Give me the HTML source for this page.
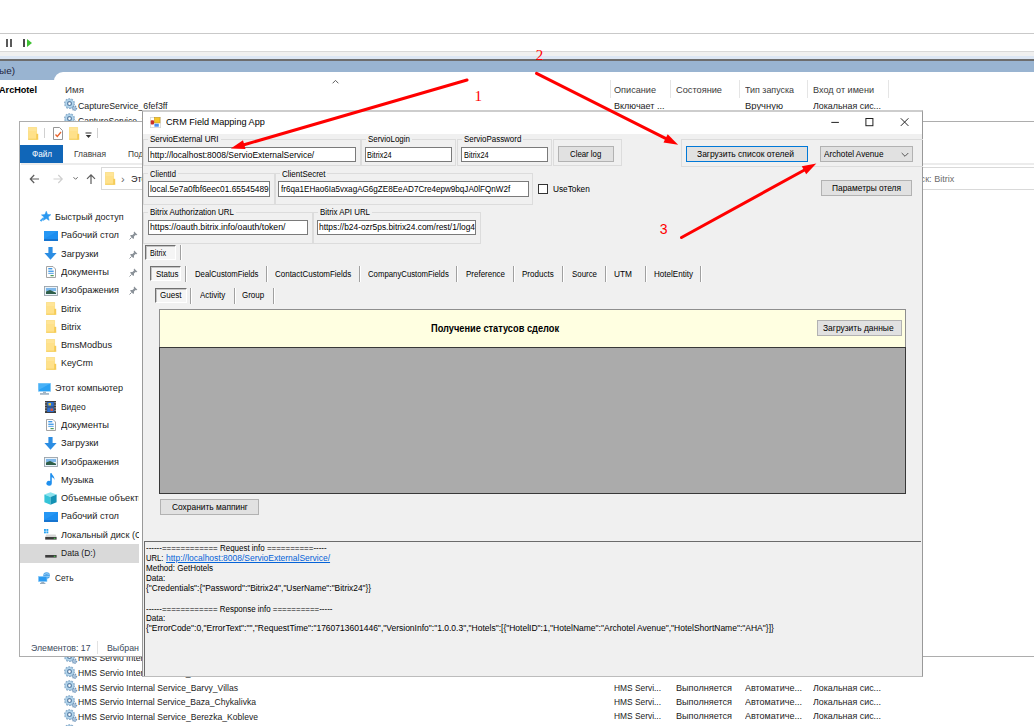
<!DOCTYPE html>
<html lang="ru">
<head>
<meta charset="utf-8">
<title>CRM Field Mapping App</title>
<style>
html,body{margin:0;padding:0;}
body{width:1034px;height:726px;overflow:hidden;position:relative;background:#fff;
  font-family:"Liberation Sans",sans-serif;color:#000;}
.a{position:absolute;}
.t{position:absolute;white-space:nowrap;line-height:14px;transform-origin:0 50%;}
.seg{font-size:9.8px;color:#1c1c1c;}
.hdr{font-size:9.8px;color:#3a3a3a;}
.colsep{position:absolute;top:80px;width:1px;height:18px;background:#e5e5e5;}
#exp{left:19.3px;top:121px;width:1020px;height:535.5px;background:#fff;border:1px solid #adadad;box-sizing:border-box;}
.nav{font-size:9.8px;color:#1a1a1a;}
#crm{left:142px;top:110px;width:781px;height:567px;background:#f0f0f0;border:1px solid #999;border-bottom-color:#bcbcbc;border-top:2px solid #cdcdcd;box-sizing:border-box;box-shadow:-1px 0 1px -0.5px rgba(0,0,0,.12);}
.ms{font-size:9.2px;color:#000;}
.gb{position:absolute;border:1px solid #dcdcdc;box-sizing:border-box;}
.tb{position:absolute;background:#fff;border:1px solid #7a7a7a;box-sizing:border-box;}
.btn{position:absolute;background:#e1e1e1;border:1px solid #b2b2b2;box-sizing:border-box;}
.vsep{position:absolute;width:1px;height:16px;background:#a0a0a0;box-shadow:1px 0 0 #fff;}
.sunk{position:absolute;box-sizing:border-box;border:1px solid;border-color:#707070 #fff #fff #707070;background:#f5f5f5;box-shadow:inset 1px 1px 0 #c4c4c4;}
</style>
</head>
<body>
<!-- MMC services background -->
<div class="a" style="left:0px;top:33px;width:1034px;height:1px;background:#c9c9c9"></div>
<div class="a" style="left:0px;top:51px;width:1034px;height:1px;background:#d9d9d9"></div>
<div class="a" style="left:0px;top:52px;width:1034px;height:4px;background:#f0f0f0"></div>
<div class="a" style="left:0px;top:56px;width:1034px;height:3px;background:#dce6f4"></div>
<div class="a" style="left:0px;top:59.3px;width:1034px;height:1.7px;background:#6d6d6d"></div>
<div class="a" style="left:0px;top:61px;width:1034px;height:19px;background:#99b4d1"></div>
<div class="a" style="left:54px;top:72px;width:990px;height:20px;background:#fff;border-radius:9px 0 0 0"></div>
<svg class="a" style="left:0;top:34px" width="40" height="17" viewBox="0 0 40 17">
  <rect x="6" y="5" width="2" height="8" fill="#5a5a5a"/><rect x="10" y="5" width="2" height="8" fill="#5a5a5a"/>
  <rect x="23" y="5" width="2" height="8" fill="#4a4a4a"/><path d="M27 5 L32 9 L27 13 Z" fill="#3fc133"/>
</svg>
<div class="t seg" style="left:-1px;top:64.3px;transform:scaleX(1.015);color:#1e1e3c">ые)</div>
<div class="t seg" style="left:-1px;top:83.3px;transform:scaleX(0.930);font-weight:bold;color:#000">ArcHotel</div>
<div class="t hdr" style="left:65px;top:83px;transform:scaleX(0.995);">Имя</div>
<svg class="a" style="left:331px;top:78px" width="10" height="7" viewBox="0 0 10 7"><path d="M1.6 5.3 L4.5 2.4 L7.4 5.3" fill="none" stroke="#5c5c5c" stroke-width="1"/></svg>
<div class="colsep" style="left:610px"></div>
<div class="colsep" style="left:670px"></div>
<div class="colsep" style="left:739px"></div>
<div class="colsep" style="left:807px"></div>
<div class="colsep" style="left:888px"></div>
<div class="t hdr" style="left:614px;top:83px;transform:scaleX(0.932);">Описание</div>
<div class="t hdr" style="left:676px;top:83px;transform:scaleX(0.941);">Состояние</div>
<div class="t hdr" style="left:745px;top:83px;transform:scaleX(0.908);">Тип запуска</div>
<div class="t hdr" style="left:813px;top:83px;transform:scaleX(0.926);">Вход от имени</div>
<svg class="a" style="left:64px;top:98.2px" width="15" height="14" viewBox="0 0 15 14"><circle cx="5.5" cy="5.6" r="4.5" fill="#b9daef" stroke="#86a9c8" stroke-width="1.9" stroke-dasharray="1.7 1.1"/><circle cx="5.5" cy="5.6" r="4.1" fill="#b4d6ed" stroke="#9cc0dc" stroke-width="0.8"/><circle cx="5.5" cy="5.6" r="1.9" fill="#fff" stroke="#5d82a8" stroke-width="1.2"/><circle cx="10.4" cy="10.3" r="2.1" fill="#a9c4dc" stroke="#7596b8" stroke-width="1.4" stroke-dasharray="1 0.9"/></svg>
<div class="t seg" style="left:77.9px;top:99.0px;transform:scaleX(0.895);">CaptureService_6fef3ff</div>
<div class="t seg" style="left:614px;top:98.7px;transform:scaleX(0.921);">Включает ...</div>
<div class="t seg" style="left:745px;top:98.7px;transform:scaleX(0.961);">Вручную</div>
<div class="t seg" style="left:813px;top:98.7px;transform:scaleX(0.907);">Локальная сис...</div>
<svg class="a" style="left:64px;top:112.9px" width="15" height="14" viewBox="0 0 15 14"><circle cx="5.5" cy="5.6" r="4.5" fill="#b9daef" stroke="#86a9c8" stroke-width="1.9" stroke-dasharray="1.7 1.1"/><circle cx="5.5" cy="5.6" r="4.1" fill="#b4d6ed" stroke="#9cc0dc" stroke-width="0.8"/><circle cx="5.5" cy="5.6" r="1.9" fill="#fff" stroke="#5d82a8" stroke-width="1.2"/><circle cx="10.4" cy="10.3" r="2.1" fill="#a9c4dc" stroke="#7596b8" stroke-width="1.4" stroke-dasharray="1 0.9"/></svg>
<div class="t seg" style="left:77.9px;top:113.7px;transform:scaleX(0.875);">CaptureService_7a21c4</div>
<svg class="a" style="left:64px;top:650.5px" width="15" height="14" viewBox="0 0 15 14"><circle cx="5.5" cy="5.6" r="4.5" fill="#b9daef" stroke="#86a9c8" stroke-width="1.9" stroke-dasharray="1.7 1.1"/><circle cx="5.5" cy="5.6" r="4.1" fill="#b4d6ed" stroke="#9cc0dc" stroke-width="0.8"/><circle cx="5.5" cy="5.6" r="1.9" fill="#fff" stroke="#5d82a8" stroke-width="1.2"/><circle cx="10.4" cy="10.3" r="2.1" fill="#a9c4dc" stroke="#7596b8" stroke-width="1.4" stroke-dasharray="1 0.9"/></svg>
<div class="t seg" style="left:77.9px;top:651.3px;transform:scaleX(0.875);">HMS Servio Internal Service_Arcadia</div>
<svg class="a" style="left:64px;top:665.5px" width="15" height="14" viewBox="0 0 15 14"><circle cx="5.5" cy="5.6" r="4.5" fill="#b9daef" stroke="#86a9c8" stroke-width="1.9" stroke-dasharray="1.7 1.1"/><circle cx="5.5" cy="5.6" r="4.1" fill="#b4d6ed" stroke="#9cc0dc" stroke-width="0.8"/><circle cx="5.5" cy="5.6" r="1.9" fill="#fff" stroke="#5d82a8" stroke-width="1.2"/><circle cx="10.4" cy="10.3" r="2.1" fill="#a9c4dc" stroke="#7596b8" stroke-width="1.4" stroke-dasharray="1 0.9"/></svg>
<div class="t seg" style="left:77.9px;top:666.3px;transform:scaleX(0.875);">HMS Servio Internal Service_Avrora</div>
<svg class="a" style="left:64px;top:680.0px" width="15" height="14" viewBox="0 0 15 14"><circle cx="5.5" cy="5.6" r="4.5" fill="#b9daef" stroke="#86a9c8" stroke-width="1.9" stroke-dasharray="1.7 1.1"/><circle cx="5.5" cy="5.6" r="4.1" fill="#b4d6ed" stroke="#9cc0dc" stroke-width="0.8"/><circle cx="5.5" cy="5.6" r="1.9" fill="#fff" stroke="#5d82a8" stroke-width="1.2"/><circle cx="10.4" cy="10.3" r="2.1" fill="#a9c4dc" stroke="#7596b8" stroke-width="1.4" stroke-dasharray="1 0.9"/></svg>
<div class="t seg" style="left:77.9px;top:680.8px;transform:scaleX(0.878);">HMS Servio Internal Service_Barvy_Villas</div>
<div class="t seg" style="left:614px;top:680.5px;transform:scaleX(0.855);">HMS Servi...</div>
<div class="t seg" style="left:676px;top:680.5px;transform:scaleX(0.929);">Выполняется</div>
<div class="t seg" style="left:745px;top:680.5px;transform:scaleX(0.919);">Автоматиче...</div>
<div class="t seg" style="left:813px;top:680.5px;transform:scaleX(0.907);">Локальная сис...</div>
<svg class="a" style="left:64px;top:694.5px" width="15" height="14" viewBox="0 0 15 14"><circle cx="5.5" cy="5.6" r="4.5" fill="#b9daef" stroke="#86a9c8" stroke-width="1.9" stroke-dasharray="1.7 1.1"/><circle cx="5.5" cy="5.6" r="4.1" fill="#b4d6ed" stroke="#9cc0dc" stroke-width="0.8"/><circle cx="5.5" cy="5.6" r="1.9" fill="#fff" stroke="#5d82a8" stroke-width="1.2"/><circle cx="10.4" cy="10.3" r="2.1" fill="#a9c4dc" stroke="#7596b8" stroke-width="1.4" stroke-dasharray="1 0.9"/></svg>
<div class="t seg" style="left:77.9px;top:695.3px;transform:scaleX(0.874);">HMS Servio Internal Service_Baza_Chykalivka</div>
<div class="t seg" style="left:614px;top:695px;transform:scaleX(0.855);">HMS Servi...</div>
<div class="t seg" style="left:676px;top:695px;transform:scaleX(0.929);">Выполняется</div>
<div class="t seg" style="left:745px;top:695px;transform:scaleX(0.919);">Автоматиче...</div>
<div class="t seg" style="left:813px;top:695px;transform:scaleX(0.907);">Локальная сис...</div>
<svg class="a" style="left:64px;top:708.8px" width="15" height="14" viewBox="0 0 15 14"><circle cx="5.5" cy="5.6" r="4.5" fill="#b9daef" stroke="#86a9c8" stroke-width="1.9" stroke-dasharray="1.7 1.1"/><circle cx="5.5" cy="5.6" r="4.1" fill="#b4d6ed" stroke="#9cc0dc" stroke-width="0.8"/><circle cx="5.5" cy="5.6" r="1.9" fill="#fff" stroke="#5d82a8" stroke-width="1.2"/><circle cx="10.4" cy="10.3" r="2.1" fill="#a9c4dc" stroke="#7596b8" stroke-width="1.4" stroke-dasharray="1 0.9"/></svg>
<div class="t seg" style="left:77.9px;top:709.5999999999999px;transform:scaleX(0.877);">HMS Servio Internal Service_Berezka_Kobleve</div>
<div class="t seg" style="left:614px;top:709.3px;transform:scaleX(0.855);">HMS Servi...</div>
<div class="t seg" style="left:676px;top:709.3px;transform:scaleX(0.929);">Выполняется</div>
<div class="t seg" style="left:745px;top:709.3px;transform:scaleX(0.919);">Автоматиче...</div>
<div class="t seg" style="left:813px;top:709.3px;transform:scaleX(0.907);">Локальная сис...</div>
<svg class="a" style="left:64px;top:723.5px" width="15" height="14" viewBox="0 0 15 14"><circle cx="5.5" cy="5.6" r="4.5" fill="#b9daef" stroke="#86a9c8" stroke-width="1.9" stroke-dasharray="1.7 1.1"/><circle cx="5.5" cy="5.6" r="4.1" fill="#b4d6ed" stroke="#9cc0dc" stroke-width="0.8"/><circle cx="5.5" cy="5.6" r="1.9" fill="#fff" stroke="#5d82a8" stroke-width="1.2"/><circle cx="10.4" cy="10.3" r="2.1" fill="#a9c4dc" stroke="#7596b8" stroke-width="1.4" stroke-dasharray="1 0.9"/></svg>
<div class="t seg" style="left:77.9px;top:724.3px;transform:scaleX(0.875);">HMS Servio Internal Service_Bukovel</div>
<!-- Explorer window -->
<div id="exp" class="a"></div>
<svg class="a" style="left:27.6px;top:126.6px" width="11" height="13" viewBox="0 0 11 13"><path d="M0.3 0.4 H8.6 V12.6 H0.3 Z" fill="#ffe18a" stroke="#f7d568" stroke-width="0.6"/><path d="M8.2 6.8 L10.2 6.8 V12.6 H8.2 Z" fill="#f6cb55"/><path d="M0.3 11.7 H10.2 V12.6 H0.3 Z" fill="#f5cd5a"/><path d="M0.6 0.7 H8.3 V4 H0.6 Z" fill="#ffe79e" opacity=".7"/></svg>
<div class="a" style="left:44px;top:128px;width:1px;height:10px;background:#d0d0d0"></div>
<svg class="a" style="left:52.6px;top:126.8px" width="10" height="13" viewBox="0 0 10 13"><path d="M0.5 0.5 H6.5 L9.5 3.5 V12.5 H0.5 Z" fill="#fff" stroke="#8a8a8a" stroke-width="0.9"/><path d="M2.5 7.5 L4.3 9.5 L8 5" fill="none" stroke="#e8632c" stroke-width="1.3"/></svg>
<svg class="a" style="left:69.4px;top:126.6px" width="11" height="13" viewBox="0 0 11 13"><path d="M0.3 0.4 H8.6 V12.6 H0.3 Z" fill="#ffe18a" stroke="#f7d568" stroke-width="0.6"/><path d="M8.2 6.8 L10.2 6.8 V12.6 H8.2 Z" fill="#f6cb55"/><path d="M0.3 11.7 H10.2 V12.6 H0.3 Z" fill="#f5cd5a"/><path d="M0.6 0.7 H8.3 V4 H0.6 Z" fill="#ffe79e" opacity=".7"/></svg>
<svg class="a" style="left:85px;top:131.5px" width="7" height="7" viewBox="0 0 7 7"><rect x="0.5" y="0.5" width="6" height="1" fill="#333"/><path d="M0.8 3 H6.2 L3.5 6 Z" fill="#333"/></svg>
<div class="a" style="left:97px;top:128px;width:1px;height:10px;background:#d0d0d0"></div>
<div class="a" style="left:20px;top:145px;width:43px;height:18px;background:#1066b8"></div>
<div class="t nav" style="left:32px;top:147px;transform:scaleX(0.830);color:#fff">Файл</div>
<div class="t nav" style="left:73.5px;top:147px;transform:scaleX(0.858);color:#3a3a3a">Главная</div>
<div class="t nav" style="left:128px;top:147px;transform:scaleX(0.850);color:#3a3a3a">Поделиться</div>
<div class="a" style="left:21px;top:163px;width:1013px;height:2px;background:#ececec"></div>
<svg class="a" style="left:28px;top:171px" width="72" height="16" viewBox="0 0 72 16">
<path d="M2.5 8 H11 M6.2 4 L2.3 8 L6.2 12" fill="none" stroke="#5d5d5d" stroke-width="1.2"/>
<path d="M25.5 8 H34 M30.3 4 L34.2 8 L30.3 12" fill="none" stroke="#cfcfcf" stroke-width="1.2"/>
<path d="M45.5 6.2 L47.6 8.3 L49.7 6.2" fill="none" stroke="#6a6a6a" stroke-width="1"/>
<path d="M63 13 V4 M59 7.8 L63 3.8 L67 7.8" fill="none" stroke="#5d5d5d" stroke-width="1.2"/>
</svg>
<div class="a" style="left:101px;top:167px;width:42px;height:23px;border:1px solid #d9d9d9;border-right:0;box-sizing:border-box;background:#fff"></div>
<svg class="a" style="left:105px;top:172px" width="11" height="13" viewBox="0 0 11 13"><path d="M0.3 0.4 H8.6 V12.6 H0.3 Z" fill="#ffe18a" stroke="#f7d568" stroke-width="0.6"/><path d="M8.2 6.8 L10.2 6.8 V12.6 H8.2 Z" fill="#f6cb55"/><path d="M0.3 11.7 H10.2 V12.6 H0.3 Z" fill="#f5cd5a"/><path d="M0.6 0.7 H8.3 V4 H0.6 Z" fill="#ffe79e" opacity=".7"/></svg>
<div class="t nav" style="left:121px;top:172px;color:#666;font-size:11px">›</div>
<div class="t nav" style="left:131px;top:172px;transform:scaleX(0.928);">Этот компьютер</div>
<div class="a" style="left:916px;top:167px;width:130px;height:23px;border:1px solid #d9d9d9;box-sizing:border-box;background:#fff"></div>
<div class="t nav" style="left:904px;top:172px;transform:scaleX(0.925);color:#6d6d6d">Поиск: Bitrix</div>
<div class="a" style="left:20.3px;top:544.2px;width:118.7px;height:18.4px;background:#d9d9d9"></div>
<div class="a" style="left:21px;top:200px;width:118px;height:400px;overflow:hidden">
<svg class="a" style="left:19px;top:11px" width="11" height="11" viewBox="0 0 11 11"><path d="M6.3 0.3 L7.5 3.5 L10.8 3.7 L8.2 5.9 L9.1 9.3 L6.2 7.5 L3.3 9.4 L4.1 6 L1.5 3.9 L4.9 3.6 Z" fill="#2a98f0" stroke="#2a98f0" stroke-width="0.6" stroke-linejoin="round"/><path d="M3.8 6.8 L0.6 10" stroke="#45a8f4" stroke-width="1.8"/></svg>
<div class="t nav" style="left:33.5px;top:10px;transform:scaleX(0.923);">Быстрый доступ</div>
<svg class="a" style="left:23px;top:31px" width="14" height="10" viewBox="0 0 14 10"><rect x="0" y="0" width="14" height="10" fill="#1c8ef0"/><rect x="0" y="8" width="14" height="2" fill="#1674cf"/><path d="M0 0 H14 L0 8 Z" fill="#2d9df6" opacity=".6"/></svg>
<div class="t nav" style="left:39.5px;top:28.30000000000001px;transform:scaleX(0.943);">Рабочий стол</div>
<svg class="a" style="left:107.5px;top:31px" width="9" height="9" viewBox="0 0 9 9"><path d="M5.2 0.6 L8.4 3.8 L7.4 4.3 L6.6 4 L5 5.6 L5 7.2 L4.2 7.9 L1.1 4.8 L1.8 4 L3.4 4 L5 2.4 L4.7 1.6 Z" fill="#8b9299"/><path d="M2.6 6.4 L0.5 8.5" stroke="#8b9299" stroke-width="1"/></svg>
<svg class="a" style="left:23px;top:47px" width="13" height="13" viewBox="0 0 13 13"><path d="M4.4 0 H8.6 V6 H12.6 L6.5 12.8 L0.4 6 H4.4 Z" fill="#2b8de3"/></svg>
<div class="t nav" style="left:39.5px;top:46.599999999999994px;transform:scaleX(0.951);">Загрузки</div>
<svg class="a" style="left:107.5px;top:50px" width="9" height="9" viewBox="0 0 9 9"><path d="M5.2 0.6 L8.4 3.8 L7.4 4.3 L6.6 4 L5 5.6 L5 7.2 L4.2 7.9 L1.1 4.8 L1.8 4 L3.4 4 L5 2.4 L4.7 1.6 Z" fill="#8b9299"/><path d="M2.6 6.4 L0.5 8.5" stroke="#8b9299" stroke-width="1"/></svg>
<svg class="a" style="left:25px;top:66px" width="10" height="12" viewBox="0 0 10 12"><path d="M0.5 0.5 H7 L9.5 3 V11.5 H0.5 Z" fill="#fdfdfd" stroke="#9a9a9a" stroke-width="0.9"/><rect x="2.3" y="2" width="4" height="1.4" fill="#3e97e6"/><rect x="2.3" y="4.6" width="5.4" height="1.3" fill="#3e97e6"/><rect x="2.3" y="6.8" width="5.4" height="1.2" fill="#6aaee8"/><rect x="4.5" y="9" width="3.2" height="1.2" fill="#4e9a5a"/></svg>
<div class="t nav" style="left:39.5px;top:64.89999999999998px;transform:scaleX(0.950);">Документы</div>
<svg class="a" style="left:107.5px;top:68px" width="9" height="9" viewBox="0 0 9 9"><path d="M5.2 0.6 L8.4 3.8 L7.4 4.3 L6.6 4 L5 5.6 L5 7.2 L4.2 7.9 L1.1 4.8 L1.8 4 L3.4 4 L5 2.4 L4.7 1.6 Z" fill="#8b9299"/><path d="M2.6 6.4 L0.5 8.5" stroke="#8b9299" stroke-width="1"/></svg>
<svg class="a" style="left:23px;top:86px" width="14" height="10" viewBox="0 0 14 10"><rect x="0.5" y="0.5" width="13" height="9" fill="#eaf3fb" stroke="#9aa3ab" stroke-width="0.9"/><rect x="2" y="2" width="10" height="3" fill="#7db7ea"/><path d="M2 8 L2 5.4 L6 4 L12 6.8 L12 8 Z" fill="#2f5f4a"/></svg>
<div class="t nav" style="left:39.5px;top:83.19999999999999px;transform:scaleX(0.942);">Изображения</div>
<svg class="a" style="left:107.5px;top:86px" width="9" height="9" viewBox="0 0 9 9"><path d="M5.2 0.6 L8.4 3.8 L7.4 4.3 L6.6 4 L5 5.6 L5 7.2 L4.2 7.9 L1.1 4.8 L1.8 4 L3.4 4 L5 2.4 L4.7 1.6 Z" fill="#8b9299"/><path d="M2.6 6.4 L0.5 8.5" stroke="#8b9299" stroke-width="1"/></svg>
<svg class="a" style="left:24.5px;top:102px" width="11" height="13" viewBox="0 0 11 13"><path d="M0.3 0.4 H8.6 V12.6 H0.3 Z" fill="#ffe18a" stroke="#f7d568" stroke-width="0.6"/><path d="M8.2 6.8 L10.2 6.8 V12.6 H8.2 Z" fill="#f6cb55"/><path d="M0.3 11.7 H10.2 V12.6 H0.3 Z" fill="#f5cd5a"/><path d="M0.6 0.7 H8.3 V4 H0.6 Z" fill="#ffe79e" opacity=".7"/></svg>
<div class="t nav" style="left:39.5px;top:101.5px;transform:scaleX(0.918);">Bitrix</div>
<svg class="a" style="left:24.5px;top:120px" width="11" height="13" viewBox="0 0 11 13"><path d="M0.3 0.4 H8.6 V12.6 H0.3 Z" fill="#ffe18a" stroke="#f7d568" stroke-width="0.6"/><path d="M8.2 6.8 L10.2 6.8 V12.6 H8.2 Z" fill="#f6cb55"/><path d="M0.3 11.7 H10.2 V12.6 H0.3 Z" fill="#f5cd5a"/><path d="M0.6 0.7 H8.3 V4 H0.6 Z" fill="#ffe79e" opacity=".7"/></svg>
<div class="t nav" style="left:39.5px;top:119.80000000000001px;transform:scaleX(0.918);">Bitrix</div>
<svg class="a" style="left:24.5px;top:139px" width="11" height="13" viewBox="0 0 11 13"><path d="M0.3 0.4 H8.6 V12.6 H0.3 Z" fill="#ffe18a" stroke="#f7d568" stroke-width="0.6"/><path d="M8.2 6.8 L10.2 6.8 V12.6 H8.2 Z" fill="#f6cb55"/><path d="M0.3 11.7 H10.2 V12.6 H0.3 Z" fill="#f5cd5a"/><path d="M0.6 0.7 H8.3 V4 H0.6 Z" fill="#ffe79e" opacity=".7"/></svg>
<div class="t nav" style="left:39.5px;top:138.10000000000002px;transform:scaleX(0.937);">BmsModbus</div>
<svg class="a" style="left:24.5px;top:157px" width="11" height="13" viewBox="0 0 11 13"><path d="M0.3 0.4 H8.6 V12.6 H0.3 Z" fill="#ffe18a" stroke="#f7d568" stroke-width="0.6"/><path d="M8.2 6.8 L10.2 6.8 V12.6 H8.2 Z" fill="#f6cb55"/><path d="M0.3 11.7 H10.2 V12.6 H0.3 Z" fill="#f5cd5a"/><path d="M0.6 0.7 H8.3 V4 H0.6 Z" fill="#ffe79e" opacity=".7"/></svg>
<div class="t nav" style="left:39.5px;top:156.39999999999998px;transform:scaleX(0.904);">KeyCrm</div>
<svg class="a" style="left:17px;top:183px" width="13" height="12" viewBox="0 0 13 12"><rect x="0.3" y="0.3" width="12.4" height="8" fill="#2aa1f3" stroke="#8ecdf9" stroke-width="0.6"/><path d="M0.6 0.6 H12.4 L0.6 7 Z" fill="#55b8f8" opacity=".7"/><rect x="5" y="8.6" width="3" height="1.4" fill="#9fb3c4"/><rect x="2" y="10.4" width="9" height="1.1" fill="#6d8aa3"/></svg>
<div class="t nav" style="left:33.5px;top:181.3px;transform:scaleX(0.928);">Этот компьютер</div>
<svg class="a" style="left:24px;top:201px" width="11" height="12" viewBox="0 0 11 12"><rect x="0" y="0" width="11" height="12" fill="#3c3c3c"/><rect x="2.2" y="1" width="6.6" height="4.6" fill="#2d6fd0"/><rect x="2.2" y="6.4" width="6.6" height="4.6" fill="#2d6fd0"/><rect x="3.5" y="2" width="2.5" height="2.5" fill="#e3c53a"/><rect x="5.5" y="7.5" width="2.5" height="2.5" fill="#d9573a"/><g fill="#cfcfcf"><rect x="0.4" y="1" width="1" height="1.3"/><rect x="0.4" y="3.6" width="1" height="1.3"/><rect x="0.4" y="6.2" width="1" height="1.3"/><rect x="0.4" y="8.8" width="1" height="1.3"/><rect x="9.6" y="1" width="1" height="1.3"/><rect x="9.6" y="3.6" width="1" height="1.3"/><rect x="9.6" y="6.2" width="1" height="1.3"/><rect x="9.6" y="8.8" width="1" height="1.3"/></g></svg>
<div class="t nav" style="left:39.5px;top:199.60000000000002px;transform:scaleX(0.859);">Видео</div>
<svg class="a" style="left:25px;top:219px" width="10" height="12" viewBox="0 0 10 12"><path d="M0.5 0.5 H7 L9.5 3 V11.5 H0.5 Z" fill="#fdfdfd" stroke="#9a9a9a" stroke-width="0.9"/><rect x="2.3" y="2" width="4" height="1.4" fill="#3e97e6"/><rect x="2.3" y="4.6" width="5.4" height="1.3" fill="#3e97e6"/><rect x="2.3" y="6.8" width="5.4" height="1.2" fill="#6aaee8"/><rect x="4.5" y="9" width="3.2" height="1.2" fill="#4e9a5a"/></svg>
<div class="t nav" style="left:39.5px;top:217.89999999999998px;transform:scaleX(0.950);">Документы</div>
<svg class="a" style="left:23px;top:237px" width="13" height="13" viewBox="0 0 13 13"><path d="M4.4 0 H8.6 V6 H12.6 L6.5 12.8 L0.4 6 H4.4 Z" fill="#2b8de3"/></svg>
<div class="t nav" style="left:39.5px;top:236.2px;transform:scaleX(0.951);">Загрузки</div>
<svg class="a" style="left:23px;top:257px" width="14" height="10" viewBox="0 0 14 10"><rect x="0.5" y="0.5" width="13" height="9" fill="#eaf3fb" stroke="#9aa3ab" stroke-width="0.9"/><rect x="2" y="2" width="10" height="3" fill="#7db7ea"/><path d="M2 8 L2 5.4 L6 4 L12 6.8 L12 8 Z" fill="#2f5f4a"/></svg>
<div class="t nav" style="left:39.5px;top:254.5px;transform:scaleX(0.942);">Изображения</div>
<svg class="a" style="left:25px;top:273px" width="10" height="13" viewBox="0 0 10 13"><path d="M4.2 0.3 H5.8 C6 2.6 9 3.4 8.4 7 C8.2 4.8 6.6 4.4 5.8 4.2 V10.2 A2.7 2.4 0 1 1 4.2 8.1 Z" fill="#1f8fee"/></svg>
<div class="t nav" style="left:39.5px;top:272.8px;transform:scaleX(0.944);">Музыка</div>
<svg class="a" style="left:23px;top:292px" width="13" height="13" viewBox="0 0 13 13"><path d="M6.5 0.3 L12.6 2.6 L6.5 5 L0.4 2.6 Z" fill="#8be3ee"/><path d="M0.4 2.6 L6.5 5 V12.8 L0.4 10.2 Z" fill="#35c4d8"/><path d="M12.6 2.6 L6.5 5 V12.8 L12.6 10.2 Z" fill="#1492b4"/></svg>
<div class="t nav" style="left:39.5px;top:291.1px;transform:scaleX(0.933);">Объемные объекты</div>
<svg class="a" style="left:23px;top:312px" width="14" height="10" viewBox="0 0 14 10"><rect x="0" y="0" width="14" height="10" fill="#1c8ef0"/><rect x="0" y="8" width="14" height="2" fill="#1674cf"/><path d="M0 0 H14 L0 8 Z" fill="#2d9df6" opacity=".6"/></svg>
<div class="t nav" style="left:39.5px;top:309.4px;transform:scaleX(0.943);">Рабочий стол</div>
<svg class="a" style="left:23px;top:329px" width="13" height="11" viewBox="0 0 13 11"><path d="M2.2 5.6 H11.6 L12.6 8 H1.2 Z" fill="#d6d6d6"/><rect x="1.2" y="8" width="11.4" height="2.6" fill="#3d3d3d"/><rect x="9.8" y="8.8" width="1.6" height="1" fill="#44d04a"/><g fill="#27a3f2"><rect x="0" y="0" width="1.9" height="1.9"/><rect x="2.4" y="0" width="1.9" height="1.9"/><rect x="0" y="2.4" width="1.9" height="1.9"/><rect x="2.4" y="2.4" width="1.9" height="1.9"/></g></svg>
<div class="t nav" style="left:39.5px;top:327.70000000000005px;transform:scaleX(0.928);">Локальный диск (C:)</div>
<svg class="a" style="left:23px;top:347px" width="13" height="11" viewBox="0 0 13 11"><path d="M2.2 5.6 H11.6 L12.6 8 H1.2 Z" fill="#d6d6d6"/><rect x="1.2" y="8" width="11.4" height="2.6" fill="#3d3d3d"/><rect x="9.8" y="8.8" width="1.6" height="1" fill="#44d04a"/></svg>
<div class="t nav" style="left:39.5px;top:346.0px;transform:scaleX(0.870);">Data (D:)</div>
<svg class="a" style="left:17px;top:371.5px" width="13" height="12" viewBox="0 0 13 12"><circle cx="8.6" cy="3.6" r="3.3" fill="#4aa3e8"/><path d="M6 2.5 Q8.6 0.8 11.4 2.4 M5.6 4.4 H11.8" stroke="#bfe1fa" stroke-width="0.7" fill="none"/><rect x="0.4" y="4.4" width="8.6" height="5.2" fill="#2b9af0" stroke="#90cdf8" stroke-width="0.6"/><rect x="3.2" y="9.9" width="3" height="0.9" fill="#8aa0b3"/><rect x="2" y="10.9" width="5.4" height="0.8" fill="#6d8aa3"/></svg>
<div class="t nav" style="left:33.5px;top:370.6px;transform:scaleX(0.849);">Сеть</div>
</div>
<div class="t nav" style="left:31px;top:640.5px;transform:scaleX(0.890);color:#3b4a5c">Элементов: 17</div>
<div class="a" style="left:97px;top:641px;width:1px;height:13px;background:#e2e2e2"></div>
<div class="t nav" style="left:107px;top:640.5px;transform:scaleX(0.899);color:#3b4a5c">Выбран</div>
<div class="t nav" style="left:143px;top:640.5px;transform:scaleX(0.920);color:#3b4a5c">1 элемент</div>
<!-- CRM window -->
<div id="crm" class="a"></div>
<div class="a" style="left:143px;top:112px;width:779px;height:22px;background:#fff"></div>
<svg class="a" style="left:150px;top:117px" width="11" height="11" viewBox="0 0 11 11"><rect x="0.4" y="0.4" width="10.2" height="10.2" fill="#fff" stroke="#d6d6d6" stroke-width="0.8"/><rect x="0.7" y="3.2" width="3.3" height="4.3" rx="0.9" fill="#c9302a"/><rect x="4.4" y="0.5" width="5.6" height="5.4" fill="#f6c72a" stroke="#c99c1c" stroke-width="0.6"/><rect x="4.4" y="6.7" width="4.4" height="3" fill="#4b8ef0"/></svg>
<div class="t seg" style="left:165.5px;top:115.2px;transform:scaleX(0.950);font-size:9.6px;color:#000">CRM Field Mapping App</div>
<svg class="a" style="left:826px;top:114px" width="90" height="17" viewBox="0 0 90 17">
<path d="M5.3 8.4 H12.9" stroke="#222" stroke-width="1"/>
<rect x="39.9" y="4.5" width="7" height="7.2" fill="none" stroke="#222" stroke-width="1"/>
<path d="M74.8 4.3 L82.4 11.9 M82.4 4.3 L74.8 11.9" stroke="#222" stroke-width="1"/>
</svg>
<div class="gb" style="left:143px;top:138.8px;width:218px;height:27.6px;"></div>
<div class="a" style="left:148px;top:136.8px;width:72.5px;height:6px;background:#f0f0f0"></div>
<div class="t ms" style="left:150px;top:132.3px;transform:scaleX(0.877);">ServioExternal URI</div>
<div class="tb" style="left:147.7px;top:147px;width:208.3px;height:15.2px;overflow:hidden">
<div class="t ms" style="left:1.7px;top:-0.10000000000000053px;transform:scaleX(0.924);">http://localhost:8008/ServioExternalService/</div>
</div>
<div class="gb" style="left:361px;top:138.8px;width:95px;height:27.6px;"></div>
<div class="a" style="left:366px;top:136.8px;width:46px;height:6px;background:#f0f0f0"></div>
<div class="t ms" style="left:368px;top:132.3px;transform:scaleX(0.865);">ServioLogin</div>
<div class="tb" style="left:364.8px;top:147px;width:87.2px;height:15.2px;overflow:hidden">
<div class="t ms" style="left:1.7px;top:-0.10000000000000053px;transform:scaleX(0.806);">Bitrix24</div>
</div>
<div class="gb" style="left:457px;top:138.8px;width:95px;height:27.6px;"></div>
<div class="a" style="left:462px;top:136.8px;width:61.3px;height:6px;background:#f0f0f0"></div>
<div class="t ms" style="left:464px;top:132.3px;transform:scaleX(0.863);">ServioPassword</div>
<div class="tb" style="left:461px;top:147px;width:87px;height:15.2px;overflow:hidden">
<div class="t ms" style="left:1.7px;top:-0.10000000000000053px;transform:scaleX(0.806);">Bitrix24</div>
</div>
<div class="gb" style="left:553px;top:138.8px;width:69px;height:27.6px;"></div>
<div class="btn" style="left:558.2px;top:146.2px;width:55.4px;height:15.4px;">
<div class="t ms" style="left:11.0px;top:0.0px;transform:scaleX(0.851);">Clear log</div>
</div>
<div class="gb" style="left:680.5px;top:138.8px;width:242px;height:28.3px;border-right:0"></div>
<div class="btn" style="left:685.5px;top:146px;width:122px;height:16px;border:1.6px solid #0078d7;">
<div class="t ms" style="left:10.9px;top:-0.2999999999999998px;transform:scaleX(0.924);">Загрузить список отелей</div>
</div>
<div class="btn" style="left:820.3px;top:146.2px;width:92.3px;height:15.4px;">
<div class="t ms" style="left:2.3px;top:0px;transform:scaleX(0.891);">Archotel Avenue</div>
<svg class="a" style="left:80px;top:4.5px" width="8" height="6" viewBox="0 0 8 6"><path d="M0.7 1 L4 4.3 L7.3 1" fill="none" stroke="#444" stroke-width="0.9"/></svg>
</div>
<div class="gb" style="left:143px;top:173.3px;width:131.5px;height:31.7px;"></div>
<div class="a" style="left:148px;top:171.3px;width:30px;height:6px;background:#f0f0f0"></div>
<div class="t ms" style="left:150px;top:166.8px;transform:scaleX(0.835);">ClientId</div>
<div class="tb" style="left:147.7px;top:181px;width:122.3px;height:15.5px;overflow:hidden">
<div class="t ms" style="left:1.7px;top:0.04999999999999982px;transform:scaleX(0.908);">local.5e7a0fbf6eec01.65545489</div>
</div>
<div class="gb" style="left:274.5px;top:173.3px;width:258.5px;height:31.7px;"></div>
<div class="a" style="left:279.5px;top:171.3px;width:47.5px;height:6px;background:#f0f0f0"></div>
<div class="t ms" style="left:281.5px;top:166.8px;transform:scaleX(0.869);">ClientSecret</div>
<div class="tb" style="left:278px;top:181px;width:250.5px;height:15.5px;overflow:hidden">
<div class="t ms" style="left:1.7px;top:0.04999999999999982px;transform:scaleX(0.882);">fr6qa1EHao6Ia5vxagAG6gZE8EeAD7Cre4epw9bqJA0lFQnW2f</div>
</div>
<div class="a" style="left:538px;top:183.5px;width:10px;height:10px;background:#fff;border:1px solid #333;box-sizing:border-box"></div>
<div class="t ms" style="left:552.6px;top:181.8px;transform:scaleX(0.901);">UseToken</div>
<div class="btn" style="left:821.2px;top:180.3px;width:90.8px;height:15.4px;">
<div class="t ms" style="left:9.9px;top:0.0px;transform:scaleX(0.912);">Параметры отеля</div>
</div>
<div class="gb" style="left:143px;top:211.6px;width:169.5px;height:32.3px;"></div>
<div class="a" style="left:148px;top:209.6px;width:88px;height:6px;background:#f0f0f0"></div>
<div class="t ms" style="left:150px;top:205.1px;transform:scaleX(0.866);">Bitrix Authorization URL</div>
<div class="tb" style="left:147.7px;top:219.5px;width:160px;height:15px;overflow:hidden">
<div class="t ms" style="left:1.7px;top:-0.20000000000000018px;transform:scaleX(0.947);">https://oauth.bitrix.info/oauth/token/</div>
</div>
<div class="gb" style="left:312.5px;top:211.6px;width:168px;height:32.3px;"></div>
<div class="a" style="left:317.5px;top:209.6px;width:54px;height:6px;background:#f0f0f0"></div>
<div class="t ms" style="left:319.5px;top:205.1px;transform:scaleX(0.859);">Bitrix API URL</div>
<div class="tb" style="left:316.5px;top:219.5px;width:159.5px;height:15px;overflow:hidden">
<div class="t ms" style="left:1.7px;top:-0.20000000000000018px;transform:scaleX(0.912);">https://b24-ozr5ps.bitrix24.com/rest/1/log4</div>
</div>
<div class="sunk" style="left:144.8px;top:244.8px;width:31px;height:14.8px;"></div>
<div class="t ms" style="left:150px;top:246px;transform:scaleX(0.783);">Bitrix</div>
<div class="vsep" style="left:180.2px;top:245px;height:15px"></div>
<div class="sunk" style="left:150px;top:266px;width:31px;height:15px;"></div>
<div class="t ms" style="left:155.5px;top:267.2px;transform:scaleX(0.864);">Status</div>
<div class="vsep" style="left:185.4px;top:265.5px;height:16px"></div>
<div class="vsep" style="left:266.3px;top:265.5px;height:16px"></div>
<div class="vsep" style="left:359.2px;top:265.5px;height:16px"></div>
<div class="vsep" style="left:456.4px;top:265.5px;height:16px"></div>
<div class="vsep" style="left:513.2px;top:265.5px;height:16px"></div>
<div class="vsep" style="left:562.3px;top:265.5px;height:16px"></div>
<div class="vsep" style="left:605px;top:265.5px;height:16px"></div>
<div class="vsep" style="left:645px;top:265.5px;height:16px"></div>
<div class="vsep" style="left:700.4px;top:265.5px;height:16px"></div>
<div class="t ms" style="left:194.5px;top:266.8px;transform:scaleX(0.846);">DealCustomFields</div>
<div class="t ms" style="left:274.6px;top:266.8px;transform:scaleX(0.868);">ContactCustomFields</div>
<div class="t ms" style="left:367.5px;top:266.8px;transform:scaleX(0.846);">CompanyCustomFields</div>
<div class="t ms" style="left:465.7px;top:266.8px;transform:scaleX(0.868);">Preference</div>
<div class="t ms" style="left:522px;top:266.8px;transform:scaleX(0.874);">Products</div>
<div class="t ms" style="left:571.5px;top:266.8px;transform:scaleX(0.858);">Source</div>
<div class="t ms" style="left:614px;top:266.8px;transform:scaleX(0.904);">UTM</div>
<div class="t ms" style="left:653.6px;top:266.8px;transform:scaleX(0.878);">HotelEntity</div>
<div class="sunk" style="left:155.2px;top:287.5px;width:31.5px;height:15.2px;"></div>
<div class="t ms" style="left:160.3px;top:288.3px;transform:scaleX(0.877);">Guest</div>
<div class="vsep" style="left:190.3px;top:287.5px;height:16px"></div>
<div class="vsep" style="left:233.6px;top:287.5px;height:16px"></div>
<div class="vsep" style="left:273.2px;top:287.5px;height:16px"></div>
<div class="t ms" style="left:199.8px;top:287.8px;transform:scaleX(0.866);">Activity</div>
<div class="t ms" style="left:241.8px;top:287.8px;transform:scaleX(0.869);">Group</div>
<div class="a" style="left:159px;top:309px;width:747px;height:39px;background:#ffffe1;border:1px solid #8e8e8e;box-sizing:border-box"></div>
<div class="a" style="left:159px;top:347px;width:747px;height:147px;background:#ababab;border:1px solid #383838;box-sizing:border-box"></div>
<div class="t ms" style="left:431px;top:320.8px;transform:scaleX(0.872);font-weight:bold;font-size:10.6px;color:#000">Получение статусов сделок</div>
<div class="btn" style="left:817.4px;top:320.2px;width:84.6px;height:15.5px;">
<div class="t ms" style="left:4.9px;top:0.04999999999999982px;transform:scaleX(0.919);">Загрузить данные</div>
</div>
<div class="btn" style="left:160px;top:499.3px;width:99px;height:15.4px;">
<div class="t ms" style="left:10.6px;top:0.0px;transform:scaleX(0.912);">Сохранить маппинг</div>
</div>
<div class="a" style="left:143.5px;top:540.5px;width:777px;height:135.3px;background:#f0f0f0;border-top:1.5px solid #6b6b6b;border-left:1px solid #6b6b6b;box-sizing:border-box"></div>
<div class="t ms" style="left:145.8px;top:540.5px;transform:scaleX(0.867);">------============ Request info ==========-----</div>
<div class="t ms" style="left:145.8px;top:561px;transform:scaleX(0.875);">Method: GetHotels</div>
<div class="t ms" style="left:145.8px;top:570.6px;transform:scaleX(0.879);">Data:</div>
<div class="t ms" style="left:145.8px;top:581px;transform:scaleX(0.911);">{"Credentials":{"Password":"Bitrix24","UserName":"Bitrix24"}}</div>
<div class="t ms" style="left:145.8px;top:601.5px;transform:scaleX(0.865);">------============ Response info ==========-----</div>
<div class="t ms" style="left:145.8px;top:611px;transform:scaleX(0.879);">Data:</div>
<div class="t ms" style="left:145.8px;top:621px;transform:scaleX(0.925);">{"ErrorCode":0,"ErrorText":"","RequestTime":"1760713601446","VersionInfo":"1.0.0.3","Hotels":[{"HotelID":1,"HotelName":"Archotel Avenue","HotelShortName":"AHA"}]}</div>
<div class="t ms" style="left:145.8px;top:551.3px;transform:scaleX(0.836);">URL:</div>
<div class="t ms" style="left:166.3px;top:551.3px;transform:scaleX(0.923);color:#0563d8;text-decoration:underline">http://localhost:8008/ServioExternalService/</div>
<!-- annotations -->
<svg class="a" style="left:0;top:0" width="1034" height="726" viewBox="0 0 1034 726"><path d="M467.0 80.0 L243.3 145.0" stroke="#ff0000" stroke-width="3" stroke-linecap="round" fill="none"/><path d="M230.8 148.6 L243.0 140.3 L245.5 149.1 Z" fill="#ff0000"/><path d="M536.5 73.3 L666.5 138.8" stroke="#ff0000" stroke-width="3" stroke-linecap="round" fill="none"/><path d="M678.1 144.7 L663.5 142.5 L667.7 134.3 Z" fill="#ff0000"/><path d="M681.5 237.5 L804.9 169.8" stroke="#ff0000" stroke-width="3" stroke-linecap="round" fill="none"/><path d="M816.3 163.5 L806.2 174.3 L801.8 166.2 Z" fill="#ff0000"/><g fill="#ff0000" font-size="15px">
<text x="474.4" y="100.8" font-family="'Liberation Serif',serif">1</text>
<text x="535.8" y="60.2" font-family="'Liberation Serif',serif">2</text>
<text x="659.8" y="234.2" font-family="'Liberation Sans',sans-serif" font-size="14px">3</text>
</g>
</svg>
</body>
</html>
